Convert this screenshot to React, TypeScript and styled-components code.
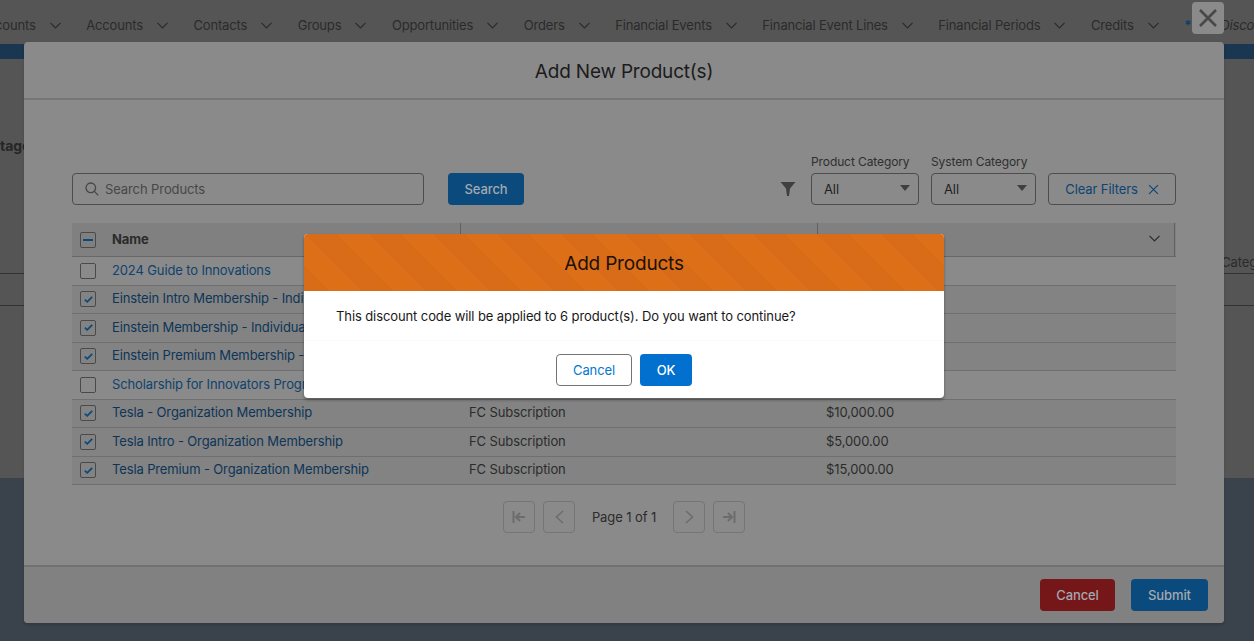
import styled, { createGlobalStyle } from 'styled-components';

const GlobalStyle = createGlobalStyle`
  html, body {
    margin: 0;
    padding: 0;
    background: #3a424b;
  }

  * {
    box-sizing: border-box;
  }

  body {
    font-family: Inter, "Noto Sans", "Liberation Sans", sans-serif;
    font-size: 13px;
    letter-spacing: -0.1px;
    color: #262626;
  }
`;

const Page = styled.div`
  position: relative;
  width: 1254px;
  height: 641px;
  overflow: hidden;
  display: flex;
  flex-direction: column;
  background: #3a424b;
`;

const Nav = styled.nav`
  height: 44px;
  flex: none;
  display: flex;
  align-items: center;
  padding-top: 6px;
  background: #555555;
  white-space: nowrap;
  overflow: hidden;
  color: #2b2b2b;
  font-size: 13px;
  letter-spacing: -0.16px;
`;

const NavItem = styled.div<{ $first?: boolean }>`
  display: flex;
  flex: none;
  align-items: center;
  gap: 14px;
  margin-right: 25.5px;
  margin-left: ${(p) => (p.$first ? '-21px' : '0')};
`;

const NavStar = styled.span`
  color: #0e3f68;
  font-weight: 700;
  margin-right: 29px;
`;

const NavCurrent = styled.span`
  font-style: italic;
`;

const Strip = styled.div`
  height: 15px;
  flex: none;
  background: #1a3650;
`;

const Behind = styled.div`
  height: 419px;
  flex: none;
  background: #555555;
  padding-top: 78px;
  overflow: hidden;
`;

const Stage = styled.h3`
  margin: 0 0 0 -9px;
  font-size: 14px;
  line-height: 18px;
  font-weight: 700;
  color: #262626;
`;

const BehindHead = styled.div`
  height: 119px;
  margin-right: -23px;
  padding-bottom: 3px;
  border-bottom: 1px solid #333333;
  display: flex;
  align-items: flex-end;
  justify-content: flex-end;
  font-size: 13px;
  color: #2b2b2b;
`;

const BehindRow = styled.div`
  height: 32px;
  border-bottom: 1px solid #333333;
`;

const Modal = styled.div`
  position: absolute;
  left: 24px;
  top: 42px;
  width: 1200px;
  height: 581px;
  display: flex;
  flex-direction: column;
  border-radius: 4px;
  background: #8a8a8a;
  box-shadow: 0 2px 3px rgba(0, 0, 0, 0.15);
`;

const CloseButton = styled.button`
  position: absolute;
  left: 1192px;
  top: 2px;
  width: 32px;
  height: 32px;
  padding: 0;
  display: flex;
  align-items: center;
  justify-content: center;
  border: 0;
  border-radius: 4px;
  background: #8a8a8a;
  color: #484848;
`;

const ModalHeader = styled.header`
  height: 58px;
  flex: none;
  display: flex;
  align-items: center;
  justify-content: center;
  padding-top: 3px;
  border-bottom: 2px solid #767676;
`;

const ModalTitle = styled.h2`
  margin: 0;
  font-size: 19px;
  font-weight: 400;
  letter-spacing: -0.2px;
  color: #1c1c1c;
`;

const ModalBody = styled.div`
  flex: 1;
  padding: 55px 48px 0;
`;

const Toolbar = styled.div`
  display: flex;
  align-items: flex-end;
`;

const SearchBox = styled.div`
  width: 352px;
  height: 32px;
  display: flex;
  align-items: center;
  gap: 6px;
  padding-left: 12px;
  border: 1px solid #4d4d4d;
  border-radius: 4px;
  color: #474747;
  font-size: 13px;
`;

const ActionButton = styled.button<{ $tone: 'blue' | 'red' }>`
  height: 32px;
  border: 0;
  border-radius: 4px;
  padding: 0;
  font: inherit;
  font-size: 13px;
  font-weight: 500;
  letter-spacing: -0.1px;
  color: #a3a9ae;
  background: ${(p) => (p.$tone === 'blue' ? '#0b4a7d' : '#751619')};
`;

const SearchButton = styled(ActionButton)`
  width: 76px;
  margin-left: 24px;
`;

const FilterIcon = styled.span`
  margin-left: auto;
  margin-right: 15px;
  height: 32px;
  display: flex;
  align-items: center;
  color: #3f3f3f;
`;

const Field = styled.div`
  display: flex;
  flex-direction: column;
  margin-right: 12px;
`;

const FieldLabel = styled.label`
  font-size: 12px;
  line-height: 14px;
  margin-bottom: 4px;
  color: #2f2f2f;
  white-space: nowrap;
`;

const SelectBox = styled.div<{ $width: number }>`
  width: ${(p) => p.$width}px;
  height: 32px;
  display: flex;
  align-items: center;
  justify-content: space-between;
  padding: 0 12px;
  border: 1px solid #4d4d4d;
  border-radius: 4px;
  font-size: 13px;
  color: #1f1f1f;
`;

const Caret = styled.span`
  width: 0;
  height: 0;
  margin-right: -4px;
  margin-top: -2px;
  border-left: 5px solid transparent;
  border-right: 5px solid transparent;
  border-top: 6px solid #3f3f3f;
`;

const ClearFilters = styled.button`
  width: 128px;
  height: 32px;
  padding: 0;
  display: flex;
  align-items: center;
  justify-content: center;
  gap: 10px;
  border: 1px solid #4d4d4d;
  border-radius: 4px;
  background: transparent;
  font: inherit;
  font-size: 13px;
  letter-spacing: -0.1px;
  color: #0c4473;
`;

const Table = styled.div`
  margin-top: 18px;
  width: 1104px;
`;

const HeadRow = styled.div`
  height: 34px;
  display: grid;
  grid-template-columns: 389px 357px 1fr;
  background: #808080;
  border-bottom: 1px solid #686868;
`;

const HeadCell = styled.div`
  display: flex;
  align-items: center;
  gap: 16px;
  padding: 0 14px 2px 8px;
  border-right: 1px solid #606060;
  font-weight: 700;
  color: #2b2b2b;

  &:last-child {
    justify-content: flex-end;
    margin-right: 1px;
  }
`;

const Row = styled.div<{ $selected: boolean }>`
  height: 28.5px;
  padding-bottom: 2px;
  display: grid;
  grid-template-columns: 389px 357px 1fr;
  align-items: center;
  background: ${(p) => (p.$selected ? '#838383' : '#8a8a8a')};
  border-bottom: 1px solid #6f6f6f;
`;

const NameCell = styled.div`
  display: flex;
  align-items: center;
  gap: 16px;
  padding-left: 8px;
  white-space: nowrap;
`;

const ProductLink = styled.a<{ $selected: boolean }>`
  color: ${(p) => (p.$selected ? '#0d3557' : '#0f426c')};
  letter-spacing: -0.13px;
  text-decoration: none;
`;

const Cell = styled.div`
  padding-left: 8px;
  color: #2b2b2b;
`;

const Checkbox = styled.span<{ $drop?: boolean }>`
  width: 16px;
  height: 16px;
  flex: none;
  display: flex;
  align-items: center;
  justify-content: center;
  margin-bottom: ${(p) => (p.$drop ? '-2px' : '0')};
  border: 1px solid #4a4a4a;
  border-radius: 2px;
  color: #0b4a7d;
`;

const Pager = styled.div`
  margin-top: 16px;
  display: flex;
  align-items: center;
  justify-content: center;
  gap: 8px;
`;

const PagerButton = styled.button`
  width: 32px;
  height: 32px;
  padding: 0;
  display: flex;
  align-items: center;
  justify-content: center;
  border: 1px solid #757575;
  border-radius: 4px;
  background: transparent;
  color: #6c6c6c;
`;

const PageLabel = styled.span`
  width: 82px;
  text-align: center;
  color: #2b2b2b;
`;

const ModalFooter = styled.footer`
  height: 58px;
  flex: none;
  display: flex;
  justify-content: flex-end;
  gap: 16px;
  padding: 12px 16px 0 0;
  border-top: 2px solid #717171;
  border-radius: 0 0 4px 4px;
  background: #818181;
`;

const FooterCancel = styled(ActionButton)`
  width: 75px;
`;

const FooterSubmit = styled(ActionButton)`
  width: 77px;
`;

const Dialog = styled.div`
  position: absolute;
  left: 304px;
  top: 234px;
  width: 640px;
  height: 164px;
  display: flex;
  flex-direction: column;
  border-radius: 4px;
  background: #ffffff;
  box-shadow: 0 2px 3px rgba(0, 0, 0, 0.35);
  overflow: hidden;
`;

const DialogHeader = styled.header`
  height: 57px;
  flex: none;
  display: flex;
  align-items: center;
  justify-content: center;
  padding-top: 2px;
  background-color: #de6f19;
  background-image: linear-gradient(
    45deg,
    rgba(0, 0, 0, 0.025) 25%,
    transparent 25%,
    transparent 50%,
    rgba(0, 0, 0, 0.025) 50%,
    rgba(0, 0, 0, 0.025) 75%,
    transparent 75%,
    transparent
  );
  background-size: 64px 64px;
`;

const DialogTitle = styled.h2`
  margin: 0;
  font-size: 19px;
  font-weight: 400;
  letter-spacing: -0.2px;
  color: #1a1208;
`;

const DialogMessage = styled.div`
  height: 50px;
  flex: none;
  padding: 17px 32px 0;
  border-bottom: 1px solid #fbfbfb;
  color: #181818;
`;

const DialogActions = styled.div`
  flex: 1;
  display: flex;
  justify-content: center;
  align-items: flex-start;
  gap: 8px;
  padding-top: 13px;
`;

const DialogCancel = styled.button`
  width: 76px;
  height: 32px;
  padding: 0;
  border: 1px solid #747474;
  border-radius: 4px;
  background: #ffffff;
  font: inherit;
  font-size: 13px;
  letter-spacing: -0.1px;
  color: #0176d3;
`;

const DialogOk = styled.button`
  width: 52px;
  height: 32px;
  padding: 0;
  border: 0;
  border-radius: 4px;
  background: #0170ce;
  font: inherit;
  font-size: 13px;
  font-weight: 500;
  letter-spacing: -0.1px;
  color: #ffffff;
`;

const Chevron = () => (
  <svg width="11" height="7" viewBox="0 0 11 7" fill="none" stroke="currentColor" strokeWidth="1.2">
    <path d="M0.5 0.8L5.5 6L10.5 0.8" />
  </svg>
);

const Cross = ({ size, width }: { size: number; width: number }) => (
  <svg width={size} height={size} viewBox="0 0 20 20" fill="none" stroke="currentColor" strokeWidth={width}>
    <path d="M2 2L18 18M18 2L2 18" />
  </svg>
);

const SearchIcon = () => (
  <svg width="14" height="14" viewBox="0 0 14 14" fill="none" stroke="currentColor" strokeWidth="1.3">
    <circle cx="5.8" cy="5.8" r="4.8" />
    <path d="M9.4 9.4L13.2 13.4" />
  </svg>
);

const Funnel = () => (
  <svg width="16" height="16" viewBox="0 0 16 16" fill="currentColor">
    <path d="M0.5 1H15.5L10 7.5L9 15H7L6 7.5Z" />
  </svg>
);

const Check = () => (
  <svg width="9" height="7" viewBox="0 0 9 7" fill="none" stroke="currentColor" strokeWidth="1.8">
    <path d="M0.8 3.6L3.2 5.8L8.2 0.8" />
  </svg>
);

const Dash = () => (
  <svg width="10" height="2" viewBox="0 0 10 2" fill="currentColor">
    <rect width="10" height="2" />
  </svg>
);

const First = () => (
  <svg width="14" height="12" viewBox="0 0 14 12" fill="none" stroke="currentColor" strokeWidth="2">
    <path d="M1.5 0V12M13 6H4.5M8 2L4 6L8 10" />
  </svg>
);

const Prev = () => (
  <svg width="9" height="14" viewBox="0 0 9 14" fill="none" stroke="currentColor" strokeWidth="1.5">
    <path d="M8 1L1.5 7L8 13" />
  </svg>
);

const Next = () => (
  <svg width="9" height="14" viewBox="0 0 9 14" fill="none" stroke="currentColor" strokeWidth="1.5">
    <path d="M1 1L7.5 7L1 13" />
  </svg>
);

const Last = () => (
  <svg width="14" height="12" viewBox="0 0 14 12" fill="none" stroke="currentColor" strokeWidth="2">
    <path d="M12.5 0V12M1 6H9.5M6 2L10 6L6 10" />
  </svg>
);

const navItems = [
  'Accounts',
  'Contacts',
  'Groups',
  'Opportunities',
  'Orders',
  'Financial Events',
  'Financial Event Lines',
  'Financial Periods',
  'Credits',
];

const products = [
  { name: '2024 Guide to Innovations', selected: false },
  { name: 'Einstein Intro Membership - Individual', selected: true },
  { name: 'Einstein Membership - Individual', selected: true },
  { name: 'Einstein Premium Membership - Individual', selected: true },
  { name: 'Scholarship for Innovators Program', selected: false },
  { name: 'Tesla - Organization Membership', selected: true, type: 'FC Subscription', price: '$10,000.00' },
  { name: 'Tesla Intro - Organization Membership', selected: true, type: 'FC Subscription', price: '$5,000.00' },
  { name: 'Tesla Premium - Organization Membership', selected: true, type: 'FC Subscription', price: '$15,000.00' },
];

const App = () => (
  <Page>
    <GlobalStyle />
    <Nav>
      <NavItem $first>
        <span>Accounts</span>
        <Chevron />
      </NavItem>
      {navItems.map((item) => (
        <NavItem key={item}>
          <span>{item}</span>
          <Chevron />
        </NavItem>
      ))}
      <NavStar>*</NavStar>
      <NavCurrent>Discounts</NavCurrent>
    </Nav>
    <Strip />
    <Behind>
      <Stage>Stage</Stage>
      <BehindHead>Category</BehindHead>
      <BehindRow />
    </Behind>

    <Modal>
      <ModalHeader>
        <ModalTitle>Add New Product(s)</ModalTitle>
      </ModalHeader>
      <ModalBody>
        <Toolbar>
          <SearchBox>
            <SearchIcon />
            Search Products
          </SearchBox>
          <SearchButton $tone="blue">Search</SearchButton>
          <FilterIcon>
            <Funnel />
          </FilterIcon>
          <Field>
            <FieldLabel>Product Category</FieldLabel>
            <SelectBox $width={108}>
              All
              <Caret />
            </SelectBox>
          </Field>
          <Field>
            <FieldLabel>System Category</FieldLabel>
            <SelectBox $width={105}>
              All
              <Caret />
            </SelectBox>
          </Field>
          <ClearFilters>
            Clear Filters
            <Cross size={11} width={2} />
          </ClearFilters>
        </Toolbar>

        <Table>
          <HeadRow>
            <HeadCell>
              <Checkbox $drop>
                <Dash />
              </Checkbox>
              Name
            </HeadCell>
            <HeadCell />
            <HeadCell>
              <Chevron />
            </HeadCell>
          </HeadRow>
          {products.map((product) => (
            <Row key={product.name} $selected={product.selected}>
              <NameCell>
                <Checkbox $drop>{product.selected && <Check />}</Checkbox>
                <ProductLink $selected={product.selected}>{product.name}</ProductLink>
              </NameCell>
              <Cell>{product.type}</Cell>
              <Cell>{product.price}</Cell>
            </Row>
          ))}
        </Table>

        <Pager>
          <PagerButton>
            <First />
          </PagerButton>
          <PagerButton>
            <Prev />
          </PagerButton>
          <PageLabel>Page 1 of 1</PageLabel>
          <PagerButton>
            <Next />
          </PagerButton>
          <PagerButton>
            <Last />
          </PagerButton>
        </Pager>
      </ModalBody>
      <ModalFooter>
        <FooterCancel $tone="red">Cancel</FooterCancel>
        <FooterSubmit $tone="blue">Submit</FooterSubmit>
      </ModalFooter>
    </Modal>

    <CloseButton>
      <Cross size={20} width={2.6} />
    </CloseButton>

    <Dialog>
      <DialogHeader>
        <DialogTitle>Add Products</DialogTitle>
      </DialogHeader>
      <DialogMessage>This discount code will be applied to 6 product(s). Do you want to continue?</DialogMessage>
      <DialogActions>
        <DialogCancel>Cancel</DialogCancel>
        <DialogOk>OK</DialogOk>
      </DialogActions>
    </Dialog>
  </Page>
);

export default App;
